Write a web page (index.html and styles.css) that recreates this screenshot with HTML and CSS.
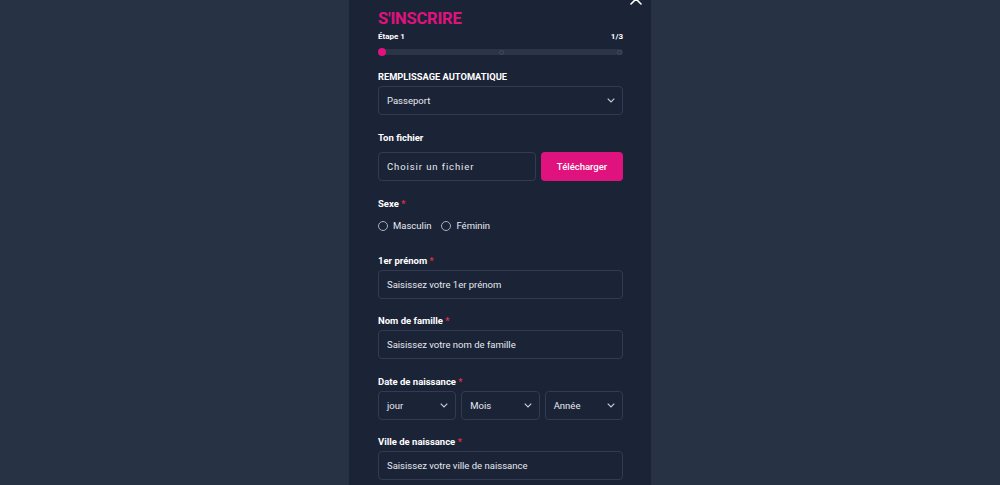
FILE: index.html
```html
<!DOCTYPE html>
<html lang="fr">
<head>
<meta charset="utf-8">
<title>S'inscrire</title>
<link rel="stylesheet" href="styles.css">
</head>
<body>
<div class="panel">
  <button class="close" aria-label="Fermer">
    <svg width="12" height="12" viewBox="0 0 12 12"><path d="M1 1L11 11M11 1L1 11" stroke="#ffffff" stroke-width="1.6" stroke-linecap="round"/></svg>
  </button>
  <h1 class="title">S'INSCRIRE</h1>
  <div class="step-row"><span>Étape 1</span><span>1/3</span></div>
  <div class="progress">
    <span class="dot active"></span>
    <span class="dot"></span>
    <span class="dot"></span>
  </div>

  <div class="field first">
    <div class="label upper">REMPLISSAGE AUTOMATIQUE</div>
    <div class="control select"><span>Passeport</span><svg class="chev" width="8" height="5" viewBox="0 0 8 5"><path d="M0.7 0.7L4 4L7.3 0.7" fill="none" stroke="#c9ced9" stroke-width="1.1"/></svg></div>
  </div>

  <div class="field">
    <div class="label gap7">Ton fichier</div>
    <div class="file-row">
      <div class="control file"><span>Choisir un fichier</span></div>
      <button class="upload">Télécharger</button>
    </div>
  </div>

  <div class="field">
    <div class="label">Sexe <span class="req">*</span></div>
    <div class="radios">
      <label class="radio"><span class="circle"></span>Masculin</label>
      <label class="radio"><span class="circle"></span>Féminin</label>
    </div>
  </div>

  <div class="field sexe-after">
    <div class="label">1er prénom <span class="req">*</span></div>
    <div class="control"><span>Saisissez votre 1er prénom</span></div>
  </div>

  <div class="field tight">
    <div class="label">Nom de famille <span class="req">*</span></div>
    <div class="control"><span>Saisissez votre nom de famille</span></div>
  </div>

  <div class="field">
    <div class="label">Date de naissance <span class="req">*</span></div>
    <div class="date-row">
      <div class="control select"><span>jour</span><svg class="chev" width="8" height="5" viewBox="0 0 8 5"><path d="M0.7 0.7L4 4L7.3 0.7" fill="none" stroke="#c9ced9" stroke-width="1.1"/></svg></div>
      <div class="control select"><span>Mois</span><svg class="chev" width="8" height="5" viewBox="0 0 8 5"><path d="M0.7 0.7L4 4L7.3 0.7" fill="none" stroke="#c9ced9" stroke-width="1.1"/></svg></div>
      <div class="control select"><span>Année</span><svg class="chev" width="8" height="5" viewBox="0 0 8 5"><path d="M0.7 0.7L4 4L7.3 0.7" fill="none" stroke="#c9ced9" stroke-width="1.1"/></svg></div>
    </div>
  </div>

  <div class="field tight">
    <div class="label">Ville de naissance <span class="req">*</span></div>
    <div class="control"><span>Saisissez votre ville de naissance</span></div>
  </div>
</div>
</body>
</html>
```

FILE: styles.css
```css
* { box-sizing: border-box; }
html, body {
  margin: 0;
  padding: 0;
  height: 100%;
  overflow: hidden;
}
body {
  background: #283245;
  font-family: Roboto, "Liberation Sans", Arial, sans-serif;
  color: #ffffff;
}
.panel {
  position: relative;
  width: 302px;
  height: 485px;
  margin: 0 auto;
  background: #1b2337;
  padding: 9px 28px 0 29px;
  overflow: hidden;
}
.close {
  position: absolute;
  top: -7px;
  right: 9px;
  background: none;
  border: 0;
  padding: 0;
  width: 12px;
  height: 12px;
  line-height: 0;
}
.title {
  margin: 0;
  font-size: 16.5px;
  line-height: 20px;
  font-weight: 700;
  color: #e0127e;
  letter-spacing: -0.2px;
}
.step-row {
  display: flex;
  justify-content: space-between;
  margin-top: 2px;
  font-size: 8px;
  line-height: 12px;
  font-weight: 700;
}
.progress {
  position: relative;
  margin-top: 6px;
  height: 6px;
  border-radius: 3px;
  background: #2c3447;
  display: flex;
  justify-content: space-between;
  align-items: center;
  padding: 0 1px 0 0;
}
.dot {
  width: 5px;
  height: 5px;
  border-radius: 50%;
  border: 1px solid #434b60;
  background: #2c3447;
}
.dot.active {
  width: 8px;
  height: 8px;
  border: 0;
  background: #e0127e;
}
.field {
  margin-top: 16px;
}
.field.first { margin-top: 15px; }
.field.sexe-after { margin-top: 21px; }
.field.tight { margin-top: 15px; }
.label {
  font-size: 9.5px;
  line-height: 14px;
  font-weight: 700;
  margin-bottom: 2px;
}
.label.upper { font-size: 9.3px; }
.label.gap7 { margin-bottom: 7px; }
.req {
  color: #e0324a;
  font-size: 9px;
}
.control {
  height: 29px;
  border: 1px solid #323b51;
  border-radius: 4px;
  display: flex;
  align-items: center;
  padding: 0 8px;
  font-size: 9.5px;
  color: #e6e9ef;
}
.select {
  justify-content: space-between;
  padding-right: 7px;
}
.chev { display: block; }
.file-row {
  display: flex;
  gap: 5px;
}
.file {
  flex: 0 0 158px;
  font-size: 9.5px;
  letter-spacing: 0.9px;
}
.upload {
  flex: 1;
  height: 29px;
  border: 0;
  border-radius: 4px;
  background: #e0127e;
  color: #ffffff;
  font-family: inherit;
  font-size: 9.5px;
  font-weight: 500;
  padding: 0;
}
.radios {
  display: flex;
  gap: 10px;
  margin-top: 8px;
}
.radio {
  display: flex;
  align-items: center;
  gap: 5px;
  font-size: 9.5px;
  line-height: 14px;
  color: #e6e9ef;
}
.circle {
  width: 10px;
  height: 10px;
  border-radius: 50%;
  border: 1px solid #a9afbd;
}
.date-row {
  display: grid;
  grid-template-columns: 1fr 1fr 1fr;
  gap: 5px;
}
```
